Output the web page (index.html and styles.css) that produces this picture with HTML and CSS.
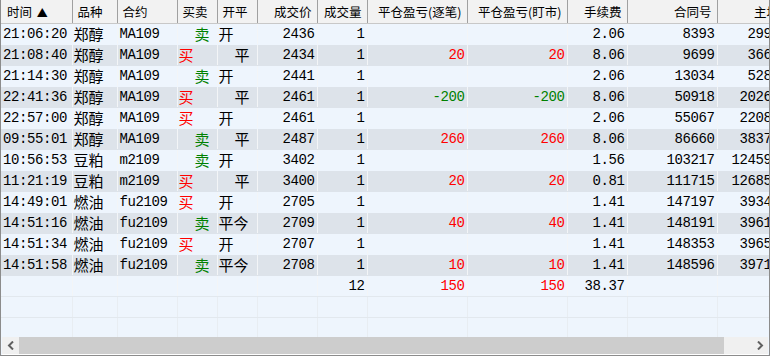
FILE: index.html
```html
<!DOCTYPE html>
<html lang="zh">
<head>
<meta charset="utf-8">
<title>成交记录</title>
<link rel="stylesheet" href="styles.css">
</head>
<body>
<div class="frame">
  <div class="view">
    <table class="grid">
      <colgroup>
        <col class="w71"><col class="w45"><col class="w60"><col class="w40"><col class="w40"><col class="w60"><col class="w50"><col class="w100"><col class="w100"><col class="w60"><col class="w90"><col class="w80">
      </colgroup>
      <thead>
        <tr>
          <th class="l first">时间 <span class="sort">▲</span></th>
          <th class="l">品种</th>
          <th class="l">合约</th>
          <th class="l">买卖</th>
          <th class="l">开平</th>
          <th>成交价</th>
          <th>成交量</th>
          <th>平仓盈亏(逐笔)</th>
          <th>平仓盈亏(盯市)</th>
          <th>手续费</th>
          <th>合同号</th>
          <th>主场号</th>
        </tr>
      </thead>
      <tbody>
        <tr class="odd"><td class="l">21:06:20</td><td class="cn">郑醇</td><td class="l">MA109</td><td class="cn"><span class="sell">卖</span></td><td class="cn">开</td><td>2436</td><td>1</td><td></td><td></td><td>2.06</td><td>8393</td><td class="lastc">29985</td></tr>
        <tr class="even"><td class="l">21:08:40</td><td class="cn">郑醇</td><td class="l">MA109</td><td class="cn"><span class="buy">买</span></td><td class="cn"><span class="ind">平</span></td><td>2434</td><td>1</td><td class="up">20</td><td class="up">20</td><td>8.06</td><td>9699</td><td class="lastc">36621</td></tr>
        <tr class="odd"><td class="l">21:14:30</td><td class="cn">郑醇</td><td class="l">MA109</td><td class="cn"><span class="sell">卖</span></td><td class="cn">开</td><td>2441</td><td>1</td><td></td><td></td><td>2.06</td><td>13034</td><td class="lastc">52873</td></tr>
        <tr class="even"><td class="l">22:41:36</td><td class="cn">郑醇</td><td class="l">MA109</td><td class="cn"><span class="buy">买</span></td><td class="cn"><span class="ind">平</span></td><td>2461</td><td>1</td><td class="down">-200</td><td class="down">-200</td><td>8.06</td><td>50918</td><td class="lastc">202634</td></tr>
        <tr class="odd"><td class="l">22:57:00</td><td class="cn">郑醇</td><td class="l">MA109</td><td class="cn"><span class="buy">买</span></td><td class="cn">开</td><td>2461</td><td>1</td><td></td><td></td><td>2.06</td><td>55067</td><td class="lastc">220812</td></tr>
        <tr class="even"><td class="l">09:55:01</td><td class="cn">郑醇</td><td class="l">MA109</td><td class="cn"><span class="sell">卖</span></td><td class="cn"><span class="ind">平</span></td><td>2487</td><td>1</td><td class="up">260</td><td class="up">260</td><td>8.06</td><td>86660</td><td class="lastc">383745</td></tr>
        <tr class="odd"><td class="l">10:56:53</td><td class="cn">豆粕</td><td class="l">m2109</td><td class="cn"><span class="sell">卖</span></td><td class="cn">开</td><td>3402</td><td>1</td><td></td><td></td><td>1.56</td><td>103217</td><td class="lastc">1245936</td></tr>
        <tr class="even"><td class="l">11:21:19</td><td class="cn">豆粕</td><td class="l">m2109</td><td class="cn"><span class="buy">买</span></td><td class="cn"><span class="ind">平</span></td><td>3400</td><td>1</td><td class="up">20</td><td class="up">20</td><td>0.81</td><td>111715</td><td class="lastc">1268541</td></tr>
        <tr class="odd"><td class="l">14:49:01</td><td class="cn">燃油</td><td class="l">fu2109</td><td class="cn"><span class="buy">买</span></td><td class="cn">开</td><td>2705</td><td>1</td><td></td><td></td><td>1.41</td><td>147197</td><td class="lastc">393452</td></tr>
        <tr class="even"><td class="l">14:51:16</td><td class="cn">燃油</td><td class="l">fu2109</td><td class="cn"><span class="sell">卖</span></td><td class="cn">平今</td><td>2709</td><td>1</td><td class="up">40</td><td class="up">40</td><td>1.41</td><td>148191</td><td class="lastc">396118</td></tr>
        <tr class="odd"><td class="l">14:51:34</td><td class="cn">燃油</td><td class="l">fu2109</td><td class="cn"><span class="buy">买</span></td><td class="cn">开</td><td>2707</td><td>1</td><td></td><td></td><td>1.41</td><td>148353</td><td class="lastc">396527</td></tr>
        <tr class="even"><td class="l">14:51:58</td><td class="cn">燃油</td><td class="l">fu2109</td><td class="cn"><span class="sell">卖</span></td><td class="cn">平今</td><td>2708</td><td>1</td><td class="up">10</td><td class="up">10</td><td>1.41</td><td>148596</td><td class="lastc">397163</td></tr>
        <tr class="odd total"><td></td><td></td><td></td><td></td><td></td><td></td><td>12</td><td class="up">150</td><td class="up">150</td><td>38.37</td><td></td><td></td></tr>
        <tr class="blank"><td></td><td></td><td></td><td></td><td></td><td></td><td></td><td></td><td></td><td></td><td></td><td></td></tr>
        <tr class="blank"><td></td><td></td><td></td><td></td><td></td><td></td><td></td><td></td><td></td><td></td><td></td><td></td></tr>
        <tr class="blank"><td></td><td></td><td></td><td></td><td></td><td></td><td></td><td></td><td></td><td></td><td></td><td></td></tr>
      </tbody>
    </table>
  </div>
  <div class="hscroll">
    <div class="arrow"><svg width="8" height="9" viewBox="0 0 8 9"><path d="M6 0.5 L2 4.5 L6 8.5" fill="none" stroke="#606060" stroke-width="2"/></svg></div>
    <div class="thumb"></div>
    <div class="track"></div>
    <div class="arrow"><svg width="8" height="9" viewBox="0 0 8 9"><path d="M2 0.5 L6 4.5 L2 8.5" fill="none" stroke="#606060" stroke-width="2"/></svg></div>
  </div>
</div>
</body>
</html>
```
FILE: styles.css
```css
html, body {
  margin: 0;
  padding: 0;
  background: #ffffff;
}
.frame {
  width: 770px;
  height: 356px;
  box-sizing: border-box;
  border-left: 1px solid #8c8c8c;
  border-right: 1px solid #8c8c8c;
  border-bottom: 1px solid #8c8c8c;
  display: flex;
  flex-direction: column;
  background: #eef5fd;
}
.view {
  flex: 1;
  overflow: hidden;
  background: #eef5fd;
}
.grid {
  border-collapse: collapse;
  table-layout: fixed;
  width: 796px;
}
.w71 { width: 71px; }
.w45 { width: 45px; }
.w60 { width: 60px; }
.w40 { width: 40px; }
.w50 { width: 50px; }
.w100 { width: 100px; }
.w90 { width: 90px; }
.w80 { width: 80px; }

th {
  height: 23px;
  padding: 0 5px 0 5px;
  background: #f2f2f2;
  border-right: 1px solid #a0a0a0;
  border-bottom: 1px solid #c8c8c8;
  font-family: "Noto Sans CJK SC", sans-serif;
  font-size: 12.5px;
  font-weight: normal;
  color: #000;
  text-align: right;
  white-space: nowrap;
  overflow: hidden;
  line-height: 22px;
}
th.l { text-align: left; }
th.first { padding-left: 6px; }
.sort { font-size: 11px; margin-left: 2px; }

td {
  height: 20px;
  padding: 0 2px 0 2px;
  border-right: 1px solid #f3f5f7;
  font-family: "Liberation Mono", "Noto Sans CJK SC", monospace;
  font-size: 14px;
  letter-spacing: -0.4px;
  line-height: 20px;
  color: #000;
  text-align: right;
  white-space: nowrap;
  overflow: hidden;
}
td.l { text-align: left; padding-left: 2px; }
td.cn {
  text-align: left;
  padding-left: 1px;
  font-family: "Noto Sans CJK SC", sans-serif;
  font-size: 15px;
  letter-spacing: 0;
}
td.lastc { padding-right: 9px; }
tr { height: 21px; }
tr.odd td { background: #eef5fd; border-bottom: 1px solid #eef5fd; }
tr.even td { background: #dde3ea; border-bottom: 1px solid #dde3ea; }
tr.blank td { background: #eef5fd; border-bottom: 1px solid #e2e8ee; border-right: 1px solid #e8edf2; }
tr.total td { border-bottom: 1px solid #e2e8ee; }

.buy { color: #ff0000; }
.sell { color: #008000; padding-left: 16px; }
.ind { padding-left: 16px; }
.up { color: #ff0000; }
.down { color: #008000; }

.hscroll {
  height: 17px;
  display: flex;
  background: #f0f0f0;
  border-bottom: 1px solid #ffffff;
  margin-left: 1px;
  margin-right: 1px;
}
.arrow {
  width: 17px;
  height: 17px;
  display: flex;
  align-items: center;
  justify-content: center;
  background: #f0f0f0;
}
.thumb {
  width: 705px;
  height: 17px;
  background: #cdcdcd;
}
.track {
  flex: 1;
  background: #f0f0f0;
}
```
